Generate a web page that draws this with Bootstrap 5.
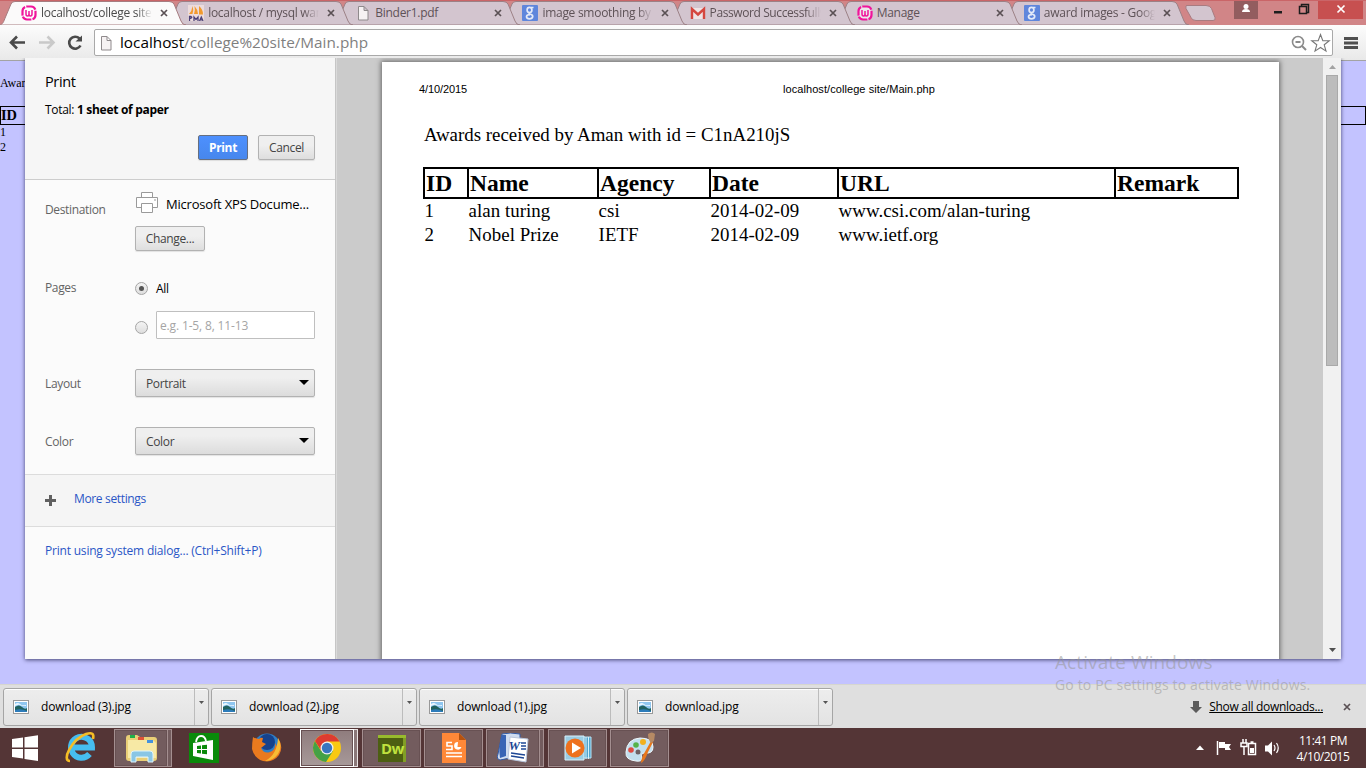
<!DOCTYPE html>
<html lang="en">
<head>
<meta charset="utf-8">
<title>Print</title>
<link rel="stylesheet" href="https://cdn.jsdelivr.net/npm/bootstrap@5.3.0/dist/css/bootstrap.min.css">
<style>
  body{width:1366px;height:768px;overflow:hidden;font-family:"Open Sans","Noto Sans",sans-serif;font-size:12px;line-height:16px;color:#000;letter-spacing:-.35px}
  svg{display:block;flex:none}
  .strip{height:25px;background:#d18587;border-top:1px solid #ca6568}
  .tabs{padding-left:8px}
  .tabx{width:167.15px;height:24px;padding-left:13px;color:#5e5257;letter-spacing:-.28px;isolation:isolate}
  .tabx.on{color:#4b4b4b}
  .tabx>.shape{position:absolute;left:-9px;top:0;z-index:-1}
  .ttl{width:111px;margin-left:4px;overflow:hidden;white-space:nowrap;-webkit-mask-image:linear-gradient(90deg,#000 86%,transparent 100%)}
  .ttl.full{-webkit-mask-image:none}
  .newtab{margin-left:7px}
  .wincaps{height:19px;margin-right:3px}
  .toolbar{height:36px;background:linear-gradient(#fcfcfc,#e9e9e9);border-bottom:1px solid #a3a3a3}
  .addr{width:1239px;height:27px;margin-left:12px;border:1px solid #a9a9a9;border-radius:2px;background:#fff}
  .addrtext{left:98px;top:33px;width:1235px;height:20px;font-size:15.3px;letter-spacing:0;color:#7f7f7f}
  .pagebg{height:623px;background:#c3c3ff;font-family:"Liberation Serif",serif;letter-spacing:0}
  .bghead{height:19px;border:1px solid #000;font-weight:700;font-size:14.4px;line-height:17px}
  .dialog{left:25px;top:58px;width:1316px;height:601px;background:#fbfbfb;box-shadow:0 1px 4px rgba(0,0,40,.65);clip-path:inset(0 -6px -6px -6px)}
  .side{width:311px;border-right:1px solid #c6c6c6;color:#000}
  .top1{height:122px;background:#f6f6f6;border-bottom:1px solid #cdcdcd;padding:15px 20px 0}
  .lab{width:90px;color:#646464}
  .pbtn{height:25px;border:1px solid #b2b2b2;border-radius:2px;background:linear-gradient(#efefef 40%,#dedede);color:#444;font-size:12px;line-height:24px;padding:0;letter-spacing:-.35px;box-shadow:0 1px 1px rgba(0,0,0,.1)}
  .pbtn.go{background:linear-gradient(#4d90fe,#4787ed);border:1px solid #666f80;color:#fff;font-weight:700}
  .psel{width:180px;height:28px;padding:0 5px 0 10px;line-height:26px;background:linear-gradient(#efefef 30%,#dcdcdc)}
  .psel span,.lab.low{position:relative;padding-top:2px}
  .dest{font-size:13px;letter-spacing:-.2px;margin-left:7px;padding-top:2px}
  .radio{width:13px;height:13px;border:1px solid #a5a5a5;border-radius:50%;background:linear-gradient(#f4f4f4,#dedede);flex:none}
  .radio i{display:block;width:5px;height:5px;margin:3px;border-radius:50%;background:#555}
  .rng{width:159px;height:28px;border:1px solid #bfbfbf;border-radius:1px;background:#fff;color:#a5a5a5;padding-left:3px;line-height:28px;letter-spacing:-.15px}
  .more{height:53px;border-top:1px solid #dcdcdc;border-bottom:1px solid #dcdcdc;background:#f5f5f5;color:#2a56c6}
  .preview{background:#cbcbcb;border-left:1px solid #dadada;overflow:hidden}
  .sheet{width:897px;height:620px;margin:4px 0 0 45px;background:#fff;box-shadow:0 0 5px 1px #666;font-family:"Liberation Serif",serif;font-size:18.9px;letter-spacing:0;line-height:24px}
  .hf{font-family:"Liberation Sans",sans-serif;font-size:11px;line-height:14px;padding:20px 0 0 37px;letter-spacing:-.1px}
  .hfu{letter-spacing:.07px}
  .awards{margin-left:41px;table-layout:fixed;width:816px;border-collapse:separate;border-spacing:0}
  .awards th{height:32px;font-size:23.5px;line-height:28px;padding:0 0 0 1px;border:solid #000;border-width:2px 0 2px 2px}
  .awards th:last-child{border-right-width:2px}
  .awards td{padding:0 0 1px 1.600px;height:24px;line-height:23px;letter-spacing:.04px}
  .sbar{width:18px;background:#f1f1f1}
  .thumb{width:12px;height:291px;background:#bcbcbc;border:1px solid #a9a9a9}
  .shelf{height:44px;background:#dfdfdf;border-top:1px solid #d6d6d0;padding-left:3px}
  .dl{width:206px;height:38px;margin-right:2px;border:1px solid #a5a5a5;border-radius:3px;background:linear-gradient(#ededed,#e3e3e3);box-shadow:inset 0 1px #fff}
  .dl svg:first-child{margin-left:9px}
  .dl .nm{margin-left:12px;letter-spacing:-.17px}
  .dl .dd{width:14px;height:36px;border-left:1px solid #bcbcbc;padding:12px 0 0 4px;margin-left:auto}
  .alld{letter-spacing:-.3px}
  .wm{left:1055px;top:649px;color:rgba(150,150,150,.55);white-space:nowrap;letter-spacing:.1px}
  .task{height:40px;background:#543536;color:#fff}
  .tb{width:59px;height:38px;margin-right:3px;border:1px solid #a48f90;background:#735c5e;box-shadow:inset 0 0 0 1px #685153}
  .tb.st{width:54px;margin-right:8px;position:relative}
  .tb.st:after{content:"";position:absolute;left:53px;top:-1px;width:4px;height:38px;border:1px solid #a48f90;border-left:0;background:#735c5e}
  .tb.act{border-color:#fff;background:linear-gradient(#8f7c7d,#a79999)}
  .tb.act:after{border-color:#e9e3e3;background:#8a7778}
  .plain{width:62px}
  .clock{width:86px;padding-top:2px;letter-spacing:-.45px}
</style>
</head>
<body class="d-flex flex-column position-relative">

<svg width="0" height="0" class="position-absolute">
  <defs>
    <symbol id="wamp" viewBox="0 0 16 16"><rect x="1.500" y="1.500" width="13" height="13" rx="4.500" fill="#fff" fill-opacity=".6" stroke="#f0149b" stroke-width="2.200" stroke-dasharray="9.500 1.200"/><path d="M5 5v4q0 2 1.500 2 1.500 0 1.500-2V6v3q0 2 1.500 2 1.500 0 1.500-2V5" fill="none" stroke="#f0149b" stroke-width="1.500"/></symbol>
    <symbol id="goog" viewBox="0 0 16 16"><rect width="16" height="16" rx="1" fill="#5f86dc"/><g fill="none" stroke="#e4eaf8" stroke-width="1.700"><ellipse cx="7.500" cy="5" rx="2.400" ry="2.600"/><path d="M9 2.500h2.500M7.500 7.600q-1 1.200 1 1.700 2.500.7 2.200 2.500-.5 2-3.200 2-3 0-3-2 0-2 3.500-2.100"/></g></symbol>
    <symbol id="file" viewBox="0 0 16 16"><path d="M3.500 1.500h5.500l4 4v9.500h-9.500zM9 1.500v4h4" fill="#f6f2f3" stroke="#8f8a8c"/></symbol>
    <symbol id="pma" viewBox="0 0 16 16"><rect width="16" height="16" fill="#ecdcdc"/><path d="M1 9Q4 6 4.500 1 6 5 4.500 9zM6 9Q7.500 5 6.500 1q3 3 3.500 8zM11 9.500V1q4 3 4 8.500z" fill="#f29a2e"/><path d="M1.500 16v-4.500h1.500q2 1.300-1.500 2.200M6 16v-4l2 2.500 2-2.500v4M11.500 16l1.800-4 1.700 4M12 14.800h2.500" fill="none" stroke="#4c4279" stroke-width="1.300"/></symbol>
    <symbol id="gmail" viewBox="0 0 16 16"><rect x="1" y="3" width="14" height="11" fill="#eee3e4"/><path d="M2 14V4l6 5.500L14 4v10" fill="none" stroke="#d5473f" stroke-width="2.400"/></symbol>
    <symbol id="cls" viewBox="0 0 8 8"><path d="M1 1l6 6M7 1L1 7" stroke="#5a5054" stroke-width="1.700"/></symbol>
    <symbol id="tabbg" viewBox="0 0 188 24"><path d="M0 24C4 23.500 4.500 21 6.500 16L12 3Q13 .5 16 .5H170Q173.500 .5 175 3L182 20Q183.500 24 187 24z"/></symbol>
    <symbol id="pic" viewBox="0 0 16 14"><rect x=".5" y=".5" width="15" height="13" fill="#fff" stroke="#999"/><path d="M2 2h12v10H2z" fill="#8fc6ef"/><path d="M2 7q4-3 7 0t5 1v4H2z" fill="#21625f"/><path d="M2 10q6-2 12 1v1H2z" fill="#2d7cba"/><path d="M2 4q3-2 5 0t6 1v1q-5 0-6-1T2 6z" fill="#e9f6ff"/></symbol>
  </defs>
</svg>

<div class="strip d-flex flex-shrink-0">
  <div class="tabs d-flex">
    <div class="tabx on d-flex align-items-center position-relative" style="z-index:9"><svg class="shape" width="188" height="24" fill="#fbfafa" stroke="#a67c80"><use href="#tabbg"/></svg><svg width="16" height="16"><use href="#wamp"/></svg><span class="ttl">localhost/college site</span><svg class="ms-2" width="8" height="8"><use href="#cls"/></svg></div>
    <div class="tabx d-flex align-items-center position-relative" style="z-index:8"><svg class="shape" width="188" height="24" fill="#d3c5cf" stroke="#9c8186"><use href="#tabbg"/></svg><svg width="16" height="16"><use href="#pma"/></svg><span class="ttl">localhost / mysql wam</span><svg class="ms-2" width="8" height="8"><use href="#cls"/></svg></div>
    <div class="tabx d-flex align-items-center position-relative" style="z-index:7"><svg class="shape" width="188" height="24" fill="#d3c5cf" stroke="#9c8186"><use href="#tabbg"/></svg><svg width="16" height="16"><use href="#file"/></svg><span class="ttl full">Binder1.pdf</span><svg class="ms-2" width="8" height="8"><use href="#cls"/></svg></div>
    <div class="tabx d-flex align-items-center position-relative" style="z-index:6"><svg class="shape" width="188" height="24" fill="#d3c5cf" stroke="#9c8186"><use href="#tabbg"/></svg><svg width="16" height="16"><use href="#goog"/></svg><span class="ttl">image smoothing by</span><svg class="ms-2" width="8" height="8"><use href="#cls"/></svg></div>
    <div class="tabx d-flex align-items-center position-relative" style="z-index:5"><svg class="shape" width="188" height="24" fill="#d3c5cf" stroke="#9c8186"><use href="#tabbg"/></svg><svg width="16" height="16"><use href="#gmail"/></svg><span class="ttl" style="letter-spacing:-.4px">Password Successfully</span><svg class="ms-2" width="8" height="8"><use href="#cls"/></svg></div>
    <div class="tabx d-flex align-items-center position-relative" style="z-index:4"><svg class="shape" width="188" height="24" fill="#d3c5cf" stroke="#9c8186"><use href="#tabbg"/></svg><svg width="16" height="16"><use href="#wamp"/></svg><span class="ttl full">Manage</span><svg class="ms-2" width="8" height="8"><use href="#cls"/></svg></div>
    <div class="tabx d-flex align-items-center position-relative" style="z-index:3"><svg class="shape" width="188" height="24" fill="#d3c5cf" stroke="#9c8186"><use href="#tabbg"/></svg><svg width="16" height="16"><use href="#goog"/></svg><span class="ttl">award images - Goog</span><svg class="ms-2" width="8" height="8"><use href="#cls"/></svg></div>
  </div>
  <svg class="newtab" width="34" height="24"><path d="M1.500 4.500H21q4 0 5.500 3l3.500 9q1 3-2 3H11q-4 0-5-3L1 7.500q-.8-3 1-3z" fill="#d3c5cf" stroke="#a87b80"/></svg>
  <div class="wincaps d-flex ms-auto">
    <svg width="129" height="19"><path d="M0 0h24v18H0z" fill="#935d5f"/><circle cx="12" cy="5.500" r="2.500" fill="#fff"/><path d="M8 11q0-3 4-3t4 3z" fill="#fff"/><path d="M40 10h8v2.500h-8z" fill="#1d1d1d"/><path d="M67.500 6V3.500h7v8H72M65.500 5.500h7v7h-7z" fill="none" stroke="#1d1d1d" stroke-width="1.500"/><path d="M84 0h45v18H84z" fill="#c75050"/><path d="M103.500 4.500l7 7M110.500 4.500l-7 7" stroke="#fff" stroke-width="1.700"/></svg>
  </div>
</div>

<div class="toolbar d-flex align-items-center flex-shrink-0">
  <svg width="82" height="34"><g fill="none" stroke-width="2.600"><path d="M25 16.500H12M17 10.500l-6 6 6 6" stroke="#4a4a4a"/><path d="M39 16.500h13M47.500 10.500l6 6-6 6" stroke="#c9c9c9"/><path d="M80.500 19.500a6 6 0 1 1-1-7" stroke="#4a4a4a"/></g><path d="M82.500 9v6.500h-7z" fill="#4a4a4a"/></svg>
  <div class="addr"></div>
  <svg class="ms-auto me-2" width="14" height="14"><path d="M0 2.500h14M0 7h14M0 11.500h14" stroke="#4f4f4f" stroke-width="3"/></svg>
</div>

<div class="pagebg flex-shrink-0">
  <div style="height:45px;padding-top:14px">Awar</div>
  <div class="bghead">ID</div>
  <div style="line-height:15px">1<br>2</div>
</div>

<div class="shelf d-flex flex-shrink-0 align-items-center">
  <div class="dl d-flex align-items-center"><svg width="16" height="14"><use href="#pic"/></svg><span class="nm">download (3).jpg</span><span class="dd"><svg class="m-0" width="5" height="4"><path d="M0 0h5L2.500 3z" fill="#555"/></svg></span></div>
  <div class="dl d-flex align-items-center"><svg width="16" height="14"><use href="#pic"/></svg><span class="nm">download (2).jpg</span><span class="dd"><svg class="m-0" width="5" height="4"><path d="M0 0h5L2.500 3z" fill="#555"/></svg></span></div>
  <div class="dl d-flex align-items-center"><svg width="16" height="14"><use href="#pic"/></svg><span class="nm">download (1).jpg</span><span class="dd"><svg class="m-0" width="5" height="4"><path d="M0 0h5L2.500 3z" fill="#555"/></svg></span></div>
  <div class="dl d-flex align-items-center"><svg width="16" height="14"><use href="#pic"/></svg><span class="nm">download.jpg</span><span class="dd"><svg class="m-0" width="5" height="4"><path d="M0 0h5L2.500 3z" fill="#555"/></svg></span></div>
  <div class="alld d-flex align-items-center ms-auto"><svg width="12" height="12"><path d="M3 0h6v6h3l-6 6-6-6h3z" fill="#5c5c5c"/></svg><u style="margin-left:7px">Show all downloads...</u><svg style="margin-left:20px;margin-right:15px" width="8" height="8"><use href="#cls"/></svg></div>
</div>

<div class="task d-flex flex-shrink-0 align-items-center">
  <svg width="50" height="40"><path d="M12 11l11-1.500V19.500H12zM24.500 9.300L38 7.300v12.200H24.500zM12 21h11v9.500L12 29zM24.500 21H38v12l-13.500-2z" fill="#fff"/></svg>
  <svg class="plain" width="62" height="40"><g fill="none"><path d="M39.500 26a10.500 10.500 0 1 1 2.500-6.500H24" stroke="#46bdf0" stroke-width="6"/><path d="M20 33C11 33 22 11 36 6q9-3 7 5" stroke="#f5bd26" stroke-width="2.600"/></g></svg>
  <div class="tb st d-flex align-items-center justify-content-center" style="margin-left:2px"><svg width="34" height="34"><path d="M2 7q0-3 3-3h8l3 2h14q3 0 3 3v18q0 3-3 3H5q-3 0-3-3z" fill="#e9cf77"/><path d="M4 9h25l3 3v15H4z" fill="#f7e9a5"/><path d="M6 4h5v3H6z" fill="#1fb04a"/><path d="M14 6h6v3h-6z" fill="#e05236"/><path d="M23 9h6v3h-6z" fill="#4593dd"/><path d="M7 31V23q0-3 3-3h16q3 0 3 3v8h-5v-5H12v5z" fill="#89c6e5" stroke="#dff4fb"/></svg></div>
  <svg class="plain" width="62" height="40" style="margin-left:-5px"><path d="M18 5h30v30H18z" fill="#0a8a0a"/><path d="M22 15l20-3v20l-20-4z" fill="#fff"/><path d="M25 14q1-6 5-6 4 0 5 5" fill="none" stroke="#fff" stroke-width="1.800"/><path d="M26 18l4-.5V21h-4zM31 17.300l5-.6V21h-5zM26 22h4v3.500l-4-.5zM31 22h5v4.300l-5-.6z" fill="#0a8a0a"/></svg>
  <svg class="plain" width="62" height="40"><circle cx="34" cy="19" r="13.500" fill="#2f7fc7"/><circle cx="34" cy="14" r="8" fill="#16428c"/><path d="M20 9q3 2 6 2 2-2 4-1l-1 4 4 2-5 4q3 6 9 4 6-2 5-9 2 3 2 4 2-4 1-9 6 9 1 17-6 8-16 6-9-3-11-12 0-6 1-12z" fill="#ea7a1e"/><path d="M45 10q5 8 0 16-5 7-13 7 12-6 13-23z" fill="#f8bc35"/></svg>
  <div class="tb st act d-flex align-items-center justify-content-center" style="margin-left:5px"><svg width="30" height="30" viewBox="0 0 30 30"><circle cx="15" cy="15" r="14" fill="#f9c913"/><path d="M2.900 8A14 14 0 0 0 14 29L21 18 15 15 9 18z" fill="#44a146"/><path d="M3 8L9.500 18 15 8.500H27.500A14 14 0 0 0 3 8z" fill="#dd3b31"/><circle cx="15" cy="15" r="6.500" fill="#f0f0f0"/><circle cx="15" cy="15" r="5.200" fill="#3875c0"/></svg></div>
  <div class="tb d-flex align-items-center justify-content-center"><svg width="30" height="28"><path d="M1 1h28v27H1z" fill="#4d5f12"/><path d="M1 1h28v3H1z" fill="#98bb2d"/><path d="M26 4h3v24h-3z" fill="#819f26"/><text x="4" y="20" font-family="Open Sans" font-weight="700" font-size="15" fill="#c0e23f" letter-spacing="-.5">Dw</text></svg></div>
  <div class="tb d-flex align-items-center justify-content-center"><svg width="24" height="30"><path d="M0 0h17l7 7v23H0z" fill="#ff8838"/><path d="M17 0l7 7h-7z" fill="#b6520e"/><path d="M10 9.500H5v3.500h5v3.500H4M4 20h16M4 23.500h16" fill="none" stroke="#fff" stroke-width="1.600"/><path d="M16 9a3.800 3.800 0 1 0 3.500 5h-4z" fill="#fff"/></svg></div>
  <div class="tb st d-flex align-items-center justify-content-center"><svg width="32" height="30"><path d="M5 1q8-2 18 0v24q-9-1-20 2-4-1-2-6z" fill="#cfdcf0" stroke="#315ba7"/><path d="M5 2q-4 10-2 23l6-2V2z" fill="#3864b5"/><path d="M13 4l18 2-2 23-18-3z" fill="#fff" stroke="#b8c5db"/><text x="11.500" y="17" font-family="Liberation Serif" font-weight="700" font-style="italic" font-size="13" fill="#1d4795">W</text><path d="M24 10h5M24 13h5M24 16h5M14 20l14 2M14 23l13 2" stroke="#1d4795" stroke-width="1.500"/></svg></div>
  <div class="tb d-flex align-items-center justify-content-center"><svg width="28" height="26"><path d="M10 2h17v21H10z" fill="#52a5cd" stroke="#b7e3f5"/><path d="M22 2v22M24.500 2v22" stroke="#d7f1fc"/><path d="M1 1h19v24H1z" fill="#9bcde4" stroke="#d7f1fc"/><circle cx="11" cy="13" r="9.500" fill="#ee711e"/><path d="M8 7.500l9 5.500-9 5.500z" fill="#fff"/></svg></div>
  <div class="tb d-flex align-items-center justify-content-center"><svg width="32" height="32"><path d="M2 20Q3 7 16 6q13 0 13 9 0 7-8 6-5 0-3 5 0 4-6 3Q1 28 2 20z" fill="#c3dfee" stroke="#eef8fc"/><circle cx="7" cy="18" r="2.800" fill="#e04b41"/><circle cx="12" cy="13" r="2.800" fill="#55b34a"/><circle cx="19" cy="10" r="3" fill="#f2b01e"/><circle cx="14" cy="20" r="2.500" fill="#6d6265"/><path d="M17 31q0-5 5-13l5-9 2 1-5 10q-3 9-7 11z" fill="#e7771c"/><path d="M24 2q4-3 7 0l-1 7-3 2q-3-3-3-9z" fill="#b68a64"/></svg></div>
  <div class="d-flex align-items-center ms-auto">
    <svg width="86" height="24"><path d="M2 14h8L6 9.500z" fill="#fff"/><path d="M23.500 5v14" stroke="#fff" stroke-width="1.500"/><path d="M25 6h6v2h6l-2 3 2 3h-6v-2h-6z" fill="#fff"/><path d="M47 7h6v3.500h-6zM49 3v4M52 3v4M50 10v9" stroke="#fff" stroke-width="1.500" fill="none"/><path d="M54.500 7.500h7v11h-7zM56.500 6h3" fill="none" stroke="#fff" stroke-width="1.500"/><path d="M56 12h4v5h-4z" fill="#fff"/><path d="M71 9.500h3l4-4v14l-4-4h-3z" fill="#fff"/><path d="M80 9q2 3 0 6M82.500 7q3.500 5 0 10" fill="none" stroke="#fff" stroke-width="1.200"/></svg>
    <div class="clock text-center">11:41 PM<br>4/10/2015</div>
  </div>
</div>

<!-- address text and page actions -->
<div class="addrtext position-absolute d-flex align-items-center">
  <svg style="margin-right:6px" width="16" height="18" viewBox="0 0 16 16"><use href="#file"/></svg><span class="url" style="margin-top:-2px"><span class="text-black">localhost</span>/college%20site/Main.php</span>
  <svg class="ms-auto" width="42" height="20"><circle cx="7" cy="9" r="5.500" fill="none" stroke="#8b8b8b" stroke-width="1.600"/><path d="M4.500 9h5M11 13l4 4" stroke="#8b8b8b" stroke-width="2"/><path d="M29.500 1.500l2.300 6.100 6.500.2-5.100 4 1.800 6.300-5.500-3.600-5.500 3.600 1.800-6.300-5.100-4 6.500-.2z" fill="#fff" stroke="#777" stroke-width="1.100"/></svg>
</div>

<div class="dialog position-absolute d-flex">
  <div class="side d-flex flex-column">
    <div class="top1">
      <div style="font-size:14.500px;line-height:18px">Print</div>
      <div style="margin-top:11px;letter-spacing:-.3px">Total: <b>1 sheet of paper</b></div>
      <div class="d-flex justify-content-end" style="gap:10px;margin-top:17px"><button class="btn pbtn go" style="width:50px">Print</button><button class="btn pbtn" style="width:57px">Cancel</button></div>
    </div>
    <div class="d-flex" style="padding:12px 20px 0;height:94px">
      <div class="lab" style="padding-top:10px">Destination</div>
      <div>
        <div class="d-flex align-items-center" style="height:22px"><svg width="24" height="22"><g fill="#fff" stroke="#9a9a9a"><path d="M6.500.5h11v6h-11z"/><path d="M1.500 5.500h21v10h-21z"/><path d="M6.500 11.500h11v9h-11z"/></g><path d="M19 8h2" stroke="#999"/></svg><span class="dest">Microsoft XPS Docume...</span></div>
        <button class="btn pbtn" style="width:70px;margin-top:12px">Change...</button>
      </div>
    </div>
    <div class="d-flex" style="padding:6px 20px 0;height:95px">
      <div class="lab">Pages</div>
      <div>
        <div class="d-flex align-items-center" style="gap:8px;height:17px"><span class="radio"><i></i></span><span>All</span></div>
        <div class="d-flex align-items-center" style="gap:8px;margin-top:14px"><span class="radio mt-1"></span><span class="rng">e.g. 1-5, 8, 11-13</span></div>
      </div>
    </div>
    <div class="d-flex align-items-center" style="padding:0 20px;height:28px"><div class="lab low">Layout</div><div class="pbtn psel d-flex justify-content-between align-items-center"><span>Portrait</span><svg width="10" height="6"><path d="M0 0h10L5 5z"/></svg></div></div>
    <div class="d-flex align-items-center" style="padding:0 20px;height:28px;margin-top:30px"><div class="lab low">Color</div><div class="pbtn psel d-flex justify-content-between align-items-center"><span>Color</span><svg width="10" height="6"><path d="M0 0h10L5 5z"/></svg></div></div>
    <div class="more d-flex align-items-center" style="margin-top:19px;padding-left:20px"><svg width="11" height="11"><path d="M0 5.500h11M5.500 0v11" stroke="#606060" stroke-width="3"/></svg><span style="margin-left:18px;padding-bottom:3px">More settings</span></div>
    <div style="padding:16px 20px;color:#2a56c6;letter-spacing:-.2px">Print using system dialog... (Ctrl+Shift+P)</div>
  </div>
  <div class="preview flex-grow-1">
    <div class="sheet">
      <div class="hf d-flex"><span style="width:364px">4/10/2015</span><span class="hfu">localhost/college site/Main.php</span></div>
      <div style="padding:27px 0 20px 42px">Awards received by Aman with id = C1nA210jS</div>
      <table class="awards">
        <colgroup><col style="width:44px"><col style="width:130px"><col style="width:112px"><col style="width:128px"><col style="width:277px"><col style="width:125px"></colgroup>
        <tr><th>ID</th><th>Name</th><th>Agency</th><th>Date</th><th>URL</th><th>Remark</th></tr>
        <tr><td>1</td><td>alan turing</td><td>csi</td><td>2014-02-09</td><td>www.csi.com/alan-turing</td><td></td></tr>
        <tr><td>2</td><td>Nobel Prize</td><td>IETF</td><td>2014-02-09</td><td>www.ietf.org</td><td></td></tr>
      </table>
    </div>
  </div>
  <div class="sbar d-flex flex-column align-items-center"><svg width="7" height="17"><path d="M0 11h7L3.500 7z" fill="#a3a3a3"/></svg><div class="thumb"></div><svg class="mt-auto" width="7" height="17"><path d="M0 6h7L3.500 10z" fill="#505050"/></svg></div>
</div>

<div class="wm position-absolute"><div style="font-size:19px;line-height:26px">Activate Windows</div><div style="font-size:14px;line-height:19px;letter-spacing:.16px">Go to PC settings to activate Windows.</div></div>

<script src="https://cdn.jsdelivr.net/npm/bootstrap@5.3.0/dist/js/bootstrap.bundle.min.js"></script>
</body>
</html>
